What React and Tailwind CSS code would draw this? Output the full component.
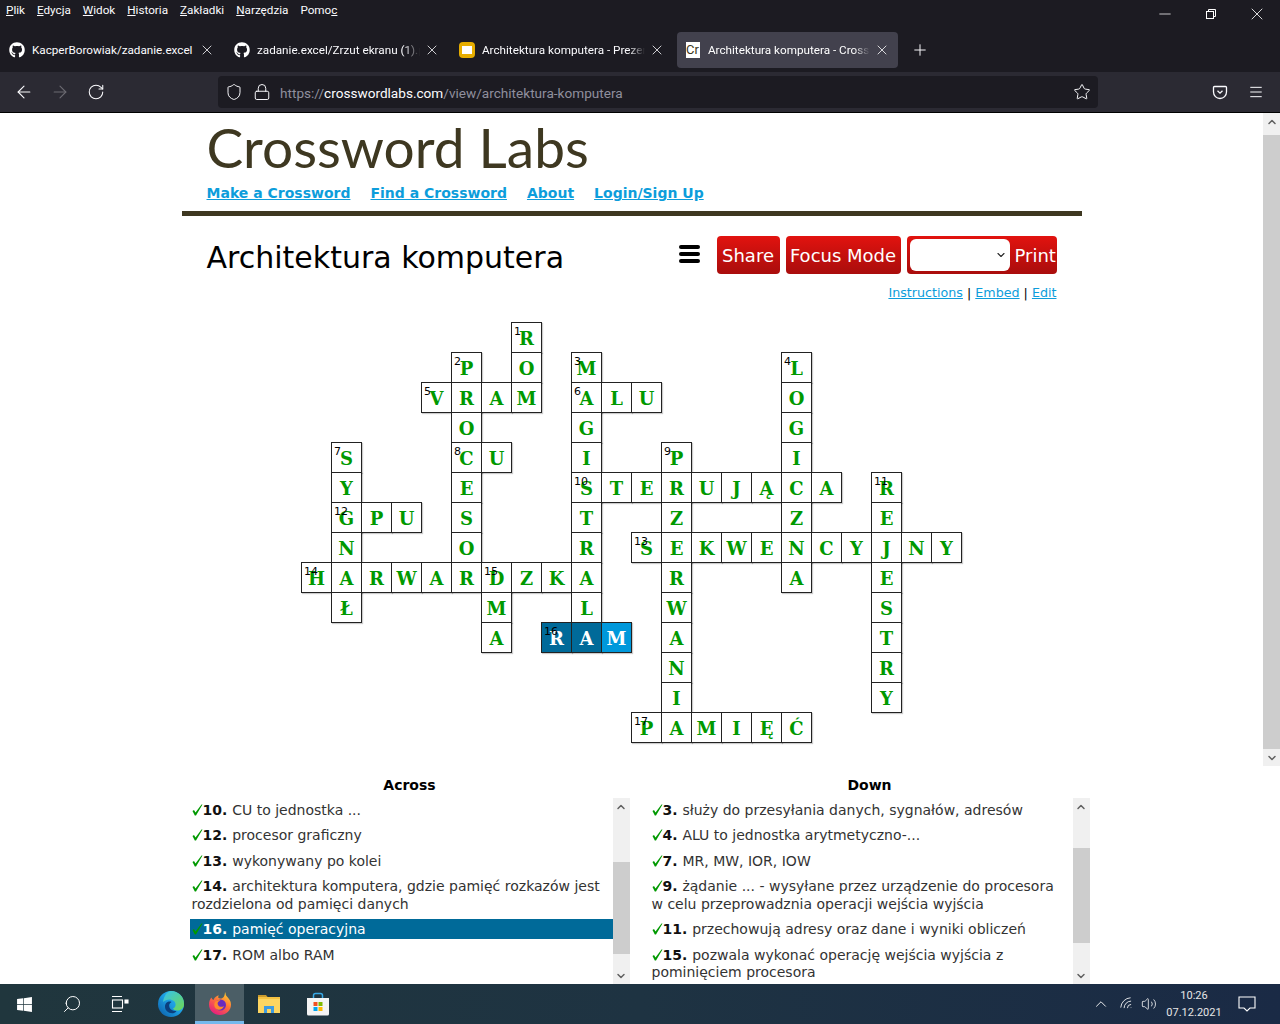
import React from 'react';
import { ArrowLeft, ArrowRight, RotateCw, Shield, Lock, Star, Menu, X, Plus, Minus, Search, ChevronUp, ChevronDown, Wifi, Volume2 } from 'lucide-react';
import { FaGithub, FaWindows } from 'react-icons/fa';

const menuItems = [
  ['P', 'lik'], ['E', 'dycja'], ['W', 'idok'], ['H', 'istoria'], ['Z', 'akładki'], ['N', 'arzędzia'], ['', 'Pomoc'],
];

const tabs = [
  { title: 'KacperBorowiak/zadanie.excel', icon: 'github' },
  { title: 'zadanie.excel/Zrzut ekranu (1).png', icon: 'github', fade: true },
  { title: 'Architektura komputera - Prezentacje Google', icon: 'slides', fade: true },
  { title: 'Architektura komputera - Crossword Labs', icon: 'cw', active: true, fade: true },
];

// one string per row, one character per cell, dot = no cell
const gridRows = [
  '.......R..............',
  '.....P.O.M......L.....',
  '....VRAM.ALU....O.....',
  '.....O...G......G.....',
  '.S...CU..I..P...I.....',
  '.Y...E...STERUJĄCA.R..',
  '.GPU.S...T..Z...Z..E..',
  '.N...O...R.SEKWENCYJNY',
  'HARWARDZKA..R...A..E..',
  '.Ł....M..L..W......S..',
  '......A.RAM.A......T..',
  '............N......R..',
  '............I......Y..',
  '...........PAMIĘĆ.....',
];

const numbers = {
  '0-7': 1, '1-5': 2, '1-9': 3, '1-16': 4, '2-4': 5, '2-9': 6, '4-1': 7, '4-5': 8, '4-12': 9,
  '5-9': 10, '5-19': 11, '6-1': 12, '7-11': 13, '8-0': 14, '8-6': 15, '10-8': 16, '13-11': 17,
};

const across = [
  ['10.', 'CU to jednostka ...'],
  ['12.', 'procesor graficzny'],
  ['13.', 'wykonywany po kolei'],
  ['14.', 'architektura komputera, gdzie pamięć rozkazów jest rozdzielona od pamięci danych'],
  ['16.', 'pamięć operacyjna', true],
  ['17.', 'ROM albo RAM'],
];

const down = [
  ['3.', 'służy do przesyłania danych, sygnałów, adresów'],
  ['4.', 'ALU to jednostka arytmetyczno-...'],
  ['7.', 'MR, MW, IOR, IOW'],
  ['9.', 'żądanie ... - wysyłane przez urządzenie do procesora w celu przeprowadznia operacji wejścia wyjścia'],
  ['11.', 'przechowują adresy oraz dane i wyniki obliczeń'],
  ['15.', 'pozwala wykonać operację wejścia wyjścia z pominięciem procesora'],
];

const TabIcon = ({ type }) => {
  if (type === 'github') return <FaGithub className="w-4 h-4 text-white shrink-0" />;
  if (type === 'slides') {
    return (
      <div className="w-4 h-4 shrink-0 rounded-sm bg-[#e6ad00] flex items-center justify-center">
        <div className="w-[10px] h-[8px] bg-white" />
      </div>
    );
  }
  return (
    <div className="w-[14px] h-4 shrink-0 bg-white text-[#3e3821] text-[13px] leading-4 overflow-hidden flex">Cr</div>
  );
};

const Tab = ({ title, icon, active, fade }) => (
  <div className={`w-[221px] h-9 rounded flex items-center ${active ? 'bg-[#42414d] text-white pl-[8px]' : 'text-[#fbfbfe] pl-[7px]'} pr-[8px]`}>
    <div className="w-4 flex justify-center shrink-0"><TabIcon type={icon} /></div>
    <div className={`ml-[7px] pt-[2px] flex-1 whitespace-nowrap overflow-hidden ${fade ? '[mask-image:linear-gradient(to_right,black_90%,transparent)]' : ''}`}>{title}</div>
    <X className="w-4 h-4 ml-1 shrink-0" strokeWidth={1.2} />
  </div>
);

const Cell = ({ letter, number, state }) => {
  let color = 'bg-white text-[#009900]';
  if (state === 'dark') color = 'bg-[#006a99] text-white';
  if (state === 'light') color = 'bg-[#0098db] text-white';
  return (
    <div className={`relative w-[31px] h-[31px] pt-[2px] border border-[#222] shadow-[1px_1px_1px_rgba(0,0,0,0.2)] flex items-center justify-center font-['DejaVu_Serif',serif] font-bold text-[18px] leading-none ${color}`}>
      {letter}
      {number && <span className="absolute left-[2px] top-[3px] text-[11px] leading-[12px] font-['DejaVu_Sans',sans-serif] font-normal text-black">{number}</span>}
    </div>
  );
};

const Crossword = () => (
  <div className="grid grid-cols-[repeat(22,30px)] auto-rows-[30px] w-[661px] h-[421px]">
    {gridRows.map((row, r) =>
      Array.from(row).map((ch, c) => {
        if (ch === '.') return <div key={`${r}-${c}`} />;
        let state = '';
        if (r === 10 && (c === 8 || c === 9)) state = 'dark';
        if (r === 10 && c === 10) state = 'light';
        return <Cell key={`${r}-${c}`} letter={ch} number={numbers[`${r}-${c}`]} state={state} />;
      })
    )}
  </div>
);

const Scrollbar = ({ className, thumbTop, thumbHeight }) => (
  <div className={`w-[17px] bg-[#f0f0f0] flex flex-col shrink-0 text-[#606060] ${className || ''}`}>
    <div className="h-[17px] flex items-center justify-center shrink-0"><ChevronUp className="w-3 h-3" strokeWidth={3} /></div>
    <div className="flex-1 flex flex-col">
      <div className={thumbTop} />
      <div className={`bg-[#cdcdcd] ${thumbHeight}`} />
    </div>
    <div className="h-[17px] flex items-center justify-center shrink-0"><ChevronDown className="w-3 h-3" strokeWidth={3} /></div>
  </div>
);

const Check = () => (
  <svg viewBox="0 0 11 12" className="inline-block w-[11px] h-3 align-[-1px]">
    <path d="M0.500 7 2 6l1.500 2.500L9.500 0.500h1L4 11.500H2.800z" fill="#009900" />
  </svg>
);

const ClueList = ({ title, items, thumbTop, thumbHeight }) => (
  <div className="w-[440px] shrink-0">
    <div className="h-[26px] text-center font-bold text-[14px] leading-[26px] text-black">{title}</div>
    <div className="flex h-[186px]">
      <div className="flex-1 pt-[1.5px] overflow-hidden">
        {items.map(([num, text, selected]) => (
          <div key={num} className={`pl-[2px] pr-[6px] pt-[2px] pb-[0.5px] mb-[5.5px] text-[14px] leading-[17.5px] ${selected ? 'bg-[#006a99] text-white' : 'text-[#333]'}`}>
            <Check />
            <span className={`font-bold ${selected ? 'text-white' : 'text-[#111]'}`}>{num} </span>
            {text}
          </div>
        ))}
      </div>
      <Scrollbar thumbTop={thumbTop} thumbHeight={thumbHeight} />
    </div>
  </div>
);

const EdgeIcon = () => (
  <svg viewBox="0 0 26 26" className="w-[26px] h-[26px]">
    <defs>
      <linearGradient id="edgeA" x1="0" y1="1" x2="1" y2="0">
        <stop offset="0" stopColor="#0c59a4" />
        <stop offset="0.5" stopColor="#1b9de2" />
        <stop offset="1" stopColor="#35c1f1" />
      </linearGradient>
      <linearGradient id="edgeB" x1="0" y1="0" x2="1" y2="1">
        <stop offset="0" stopColor="#35c1f1" />
        <stop offset="1" stopColor="#6fd950" />
      </linearGradient>
    </defs>
    <circle cx="13" cy="13" r="13" fill="url(#edgeA)" />
    <path d="M13 0a13 13 0 0 1 13 13c0 4-3 6.500-6.500 6.500-2.500 0-4-1-4.500-2 3-1 3.500-5 1-7.500C13 7.500 8 8 5 11 6 5 9 0 13 0z" fill="url(#edgeB)" />
    <path d="M16 22c-5 1-9-2-9-6.500C7 11.500 11 9.500 13.500 11c-2 1-3 3-2 5.500 1 2.500 4 4 7 3.500-.6 1-1.500 1.700-2.500 2z" fill="#0b3f7e" />
  </svg>
);

const FirefoxIcon = () => (
  <svg viewBox="0 0 24 24" className="w-6 h-6">
    <defs>
      <linearGradient id="foxA" x1="0.8" y1="0" x2="0.2" y2="1">
        <stop offset="0" stopColor="#ffd52e" />
        <stop offset="0.45" stopColor="#ff7139" />
        <stop offset="1" stopColor="#e31587" />
      </linearGradient>
    </defs>
    <path d="M17 1c1 2 .5 3 1.500 4C21 7.500 23 10 23 13.500 23 19.500 18 24 12 24S1 19.500 1 13.500C1 10.500 2 8 3.500 6.500 4 8 4.500 8.500 5.500 9 6.500 6 9 4.500 11 4.500 9.500 6 10 7 12 7.500 15 8 17 5 17 1z" fill="url(#foxA)" />
    <circle cx="12.500" cy="14" r="5.500" fill="#6a2bbf" />
    <path d="M7 11c2-2 4-2 5.500-1.500C10 10 9 12 10 14c1 2 4 2.500 6 1-1 3-4 4.500-6.500 3.500C6.500 17.500 5.500 14 7 11z" fill="#ff8a2b" />
  </svg>
);

const FolderIcon = () => (
  <svg viewBox="0 0 24 22" className="w-6 h-[22px]">
    <path d="M1 2h8l2 2.500H1z" fill="#c99a2e" />
    <rect x="1" y="4" width="22" height="16" fill="#fcd561" />
    <rect x="1" y="4" width="22" height="2" fill="#f5c242" />
    <path d="M7 20v-7h10v7h-3v-4h-4v4z" fill="#3d9be0" />
  </svg>
);

const StoreIcon = () => (
  <svg viewBox="0 0 24 24" className="w-6 h-6">
    <path d="M7.500 6V3.500a2 2 0 0 1 2-2h5a2 2 0 0 1 2 2V6" fill="none" stroke="#38a9e6" strokeWidth="1.500" />
    <path d="M1 6h22v16a1.500 1.500 0 0 1-1.500 1.500h-19A1.500 1.500 0 0 1 1 22z" fill="#f4f4f4" />
    <rect x="7.500" y="10" width="4" height="4" fill="#f25022" />
    <rect x="12.500" y="10" width="4" height="4" fill="#7fba00" />
    <rect x="7.500" y="15" width="4" height="4" fill="#00a4ef" />
    <rect x="12.500" y="15" width="4" height="4" fill="#ffb900" />
  </svg>
);

const TaskSlot = ({ children, active, narrow }) => (
  <div className={`${narrow ? 'w-12' : 'w-[49px]'} h-10 flex items-center justify-center shrink-0 ${active ? 'bg-[#4b5e66] border-b-[3px] border-[#76b9ed]' : ''}`}>
    {children}
  </div>
);

const redButton = 'h-[38px] rounded bg-gradient-to-b from-[#e2130f] to-[#a90d0c]';

export default function App() {
  return (
    <div className="w-[1280px] h-[1024px] overflow-hidden flex flex-col bg-white font-['DejaVu_Sans',sans-serif]">
      {/* browser chrome */}
      <div className="bg-[#1c1b22] h-[72px] shrink-0 font-['Roboto',sans-serif] text-[11.7px] text-[#fbfbfe]">
        <div className="h-7 flex items-start justify-between">
          <div className="flex gap-3 pl-[6px] pt-[2px] leading-[17px]">
            {menuItems.map(([key, rest]) => (
              <span key={rest}>
                <span className="underline">{key}</span>
                {rest === 'Pomoc' ? <>Pomo<span className="underline">c</span></> : rest}
              </span>
            ))}
          </div>
          <div className="flex text-white">
            <div className="w-[46px] h-7 flex items-center justify-center"><Minus className="w-[18px] h-[18px]" strokeWidth={1} /></div>
            <div className="w-[46px] h-7 flex items-center justify-center">
              <svg viewBox="0 0 10 10" className="w-[10px] h-[10px]" fill="none" stroke="currentColor" strokeWidth="1">
                <rect x="0.500" y="2.500" width="7" height="7" />
                <path d="M2.500 2.500V.5h7v7H7.500" />
              </svg>
            </div>
            <div className="w-[46px] h-7 flex items-center justify-center"><X className="w-5 h-5" strokeWidth={1} /></div>
          </div>
        </div>
        <div className="flex items-start pt-1 pl-[2px] gap-1">
          {tabs.map((t) => <Tab key={t.title} {...t} />)}
          <div className="w-8 h-9 ml-[2px] flex items-center justify-center"><Plus className="w-[18px] h-[18px]" strokeWidth={1.3} /></div>
        </div>
      </div>

      <div className="bg-[#2b2a33] h-[41px] shrink-0 border-b border-black flex items-center text-[#fbfbfe] font-['Roboto',sans-serif]">
        <div className="w-[218px] flex shrink-0 pl-[6px]">
          <div className="w-9 flex justify-center"><ArrowLeft className="w-5 h-5" strokeWidth={1.3} /></div>
          <div className="w-9 flex justify-center text-[#6c6b72]"><ArrowRight className="w-5 h-5" strokeWidth={1.3} /></div>
          <div className="w-9 flex items-center justify-center"><RotateCw className="w-[18px] h-[18px]" strokeWidth={1.4} /></div>
        </div>
        <div className="w-[880px] h-8 bg-[#1c1b22] rounded flex items-center pl-[7px] pr-[7px]">
          <Shield className="w-[18px] h-[18px]" strokeWidth={1.3} />
          <Lock className="w-[18px] h-[18px] ml-[10px]" strokeWidth={1.3} />
          <div className="ml-[9px] pt-[2px] flex-1 text-[13.6px] text-[#8f8f9d]">https://<span className="text-[#fbfbfe]">crosswordlabs.com</span>/view/architektura-komputera</div>
          <Star className="w-[18px] h-[18px]" strokeWidth={1.3} />
        </div>
        <div className="flex pl-[114px] gap-5">
          <svg viewBox="0 0 16 16" className="w-4 h-4" fill="none" stroke="currentColor" strokeWidth="1.300">
            <path d="M2.500 2.500h11a1 1 0 0 1 1 1V8a6.500 6.500 0 0 1-13 0V3.500a1 1 0 0 1 1-1z" />
            <path d="M5.500 6.800 8 9.200l2.500-2.400" />
          </svg>
          <Menu className="w-4 h-4" strokeWidth={1.5} />
        </div>
      </div>

      {/* page */}
      <div className="flex-1 flex overflow-hidden min-h-0">
        <div className="flex-1 min-w-0 flex justify-center">
          <div className="w-[900px] shrink-0">
            <div className="h-[103px] border-b-[5px] border-[#3e3821] pl-[25px]">
              <div className="h-[64px] pt-[2px] font-['Lato',sans-serif] text-[#3e3821] text-[55px] leading-[64px]">Crossword Labs</div>
              <div className="mt-[6px] flex gap-5 font-bold text-[14px] leading-5 text-[#0d9ddb] underline">
                <span>Make a Crossword</span>
                <span>Find a Crossword</span>
                <span>About</span>
                <span>Login/Sign Up</span>
              </div>
            </div>
            <div className="pl-[25px] pr-[25px] pt-5 flex">
              <div className="mt-[1px] text-[30px] leading-[42px] text-black">Architektura komputera</div>
              <div className="ml-auto flex items-center h-[38px] text-[18px] text-white">
                <div className="flex flex-col gap-[3px] mr-[17px] -mt-[2px]">
                  <div className="w-[21px] h-1 bg-black rounded-sm" />
                  <div className="w-[21px] h-1 bg-black rounded-sm" />
                  <div className="w-[21px] h-1 bg-black rounded-sm" />
                </div>
                <div className={`${redButton} w-[63px] flex items-center justify-center`}>Share</div>
                <div className={`${redButton} w-[115px] ml-[6px] flex items-center justify-center whitespace-nowrap`}>Focus Mode</div>
                <div className={`${redButton} w-[150px] ml-[6px] flex items-center pl-[3px]`}>
                  <div className="relative w-[100px] h-[32px] shrink-0">
                    <select className="w-full h-full appearance-none rounded-md bg-white text-black text-[13px]"><option></option></select>
                    <ChevronDown className="absolute right-[3px] top-[10px] w-3 h-3 text-[#222]" strokeWidth={2.2} />
                  </div>
                  <span className="ml-[5px]">Print</span>
                </div>
              </div>
            </div>
            <div className="pr-[25px] mt-[4px] h-5 text-right text-[12.7px] leading-5 text-black">
              <span className="text-[#0d9ddb] underline">Instructions</span> | <span className="text-[#0d9ddb] underline">Embed</span> | <span className="text-[#0d9ddb] underline">Edit</span>
            </div>
            <div className="mt-[19px] ml-[119.5px]"><Crossword /></div>
            <div className="mt-[29px] ml-2 flex gap-5 w-[900px]">
              <ClueList title="Across" items={across} thumbTop="h-[47px]" thumbHeight="h-[92px]" />
              <ClueList title="Down" items={down} thumbTop="h-[33px]" thumbHeight="h-[95px]" />
            </div>
          </div>
        </div>
        <div className="self-start h-[653px] shrink-0 flex">
          <Scrollbar className="h-[653px]" thumbTop="h-[5px]" thumbHeight="h-[614px]" />
        </div>
      </div>

      {/* taskbar */}
      <div className="h-10 shrink-0 bg-gradient-to-r from-[#20363d] via-[#1e3342] to-[#1a2a45] flex items-center text-white font-['Roboto',sans-serif]">
        <TaskSlot narrow><FaWindows className="w-[17px] h-[17px]" /></TaskSlot>
        <TaskSlot narrow><Search className="w-5 h-5 -scale-x-100" strokeWidth={1.2} /></TaskSlot>
        <TaskSlot narrow>
          <svg viewBox="0 0 18 18" className="w-[18px] h-[18px]" fill="none" stroke="currentColor" strokeWidth="1.100">
            <path d="M1 1.500h10M1 16.500h10" />
            <rect x="1.500" y="5" width="10" height="8" />
            <rect x="14" y="5" width="3" height="3" fill="currentColor" />
          </svg>
        </TaskSlot>
        <div className="ml-[2px] flex">
          <TaskSlot><EdgeIcon /></TaskSlot>
          <TaskSlot active><FirefoxIcon /></TaskSlot>
          <TaskSlot><FolderIcon /></TaskSlot>
          <TaskSlot><StoreIcon /></TaskSlot>
        </div>
        <div className="ml-auto flex items-center h-10">
          <ChevronUp className="w-[18px] h-[18px]" strokeWidth={1.2} />
          <Wifi className="w-4 h-4 ml-[9px] -rotate-45" strokeWidth={1.2} />
          <Volume2 className="w-4 h-4 ml-[6px]" strokeWidth={1.2} />
          <div className="w-[60px] ml-[7px] text-center text-[11px] leading-[17px] text-[#e6e6e6]">
            <div>10:26</div>
            <div>07.12.2021</div>
          </div>
          <svg viewBox="0 0 18 16" className="w-[18px] h-4 ml-[14px] mr-6" fill="none" stroke="currentColor" strokeWidth="1.100">
            <path d="M1 1h16v11h-5l-3 3-3-3H1z" />
          </svg>
        </div>
      </div>
    </div>
  );
}
